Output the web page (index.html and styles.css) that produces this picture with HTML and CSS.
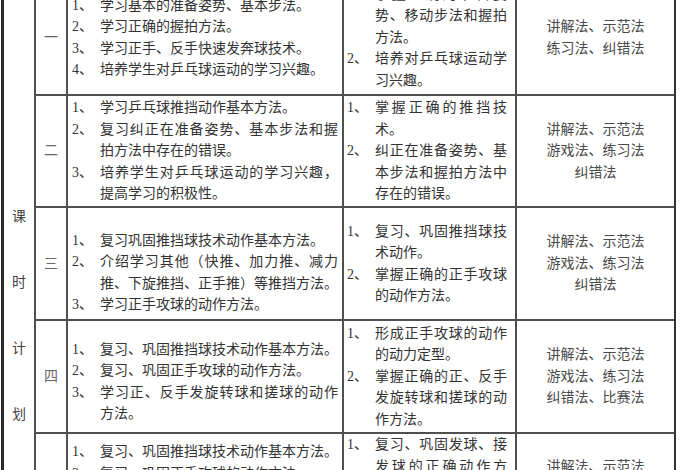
FILE: index.html
```html
<!DOCTYPE html>
<html lang="zh-CN">
<head>
<meta charset="utf-8">
<title>课时计划</title>
<link rel="stylesheet" href="styles.css">
</head>
<body>
<div class="sheet">
  <div class="side"><span>课</span><span>时</span><span>计</span><span>划</span></div>

  <!-- row 1 -->
  <div class="cell no">一</div>
  <div class="cell c3">
    <div class="item"><span class="num">1、</span><div class="txt"><span class="ln">学习基本的准备姿势、基本步法。</span></div></div>
    <div class="item"><span class="num">2、</span><div class="txt"><span class="ln">学习正确的握拍方法。</span></div></div>
    <div class="item"><span class="num">3、</span><div class="txt"><span class="ln">学习正手、反手快速发奔球技术。</span></div></div>
    <div class="item"><span class="num">4、</span><div class="txt"><span class="ln">培养学生对乒乓球运动的学习兴趣。</span></div></div>
  </div>
  <div class="cell c4">
    <div class="item"><span class="num">1、</span><div class="txt"><span class="ln j">掌握正确的准备姿</span><span class="ln j">势、移动步法和握拍</span><span class="ln">方法。</span></div></div>
    <div class="item"><span class="num">2、</span><div class="txt"><span class="ln j">培养对乒乓球运动学</span><span class="ln">习兴趣。</span></div></div>
  </div>
  <div class="cell c5"><span>讲解法、示范法</span><span>练习法、纠错法</span></div>

  <!-- row 2 -->
  <div class="cell no">二</div>
  <div class="cell c3">
    <div class="item"><span class="num">1、</span><div class="txt"><span class="ln">学习乒乓球推挡动作基本方法。</span></div></div>
    <div class="item"><span class="num">2、</span><div class="txt"><span class="ln j">复习纠正在准备姿势、基本步法和握</span><span class="ln">拍方法中存在的错误。</span></div></div>
    <div class="item"><span class="num">3、</span><div class="txt"><span class="ln j">培养学生对乒乓球运动的学习兴趣，</span><span class="ln">提高学习的积极性。</span></div></div>
  </div>
  <div class="cell c4">
    <div class="item"><span class="num">1、</span><div class="txt"><span class="ln j">掌握正确的推挡技</span><span class="ln">术。</span></div></div>
    <div class="item"><span class="num">2、</span><div class="txt"><span class="ln j">纠正在准备姿势、基</span><span class="ln j">本步法和握拍方法中</span><span class="ln">存在的错误。</span></div></div>
  </div>
  <div class="cell c5"><span>讲解法、示范法</span><span>游戏法、练习法</span><span>纠错法</span></div>

  <!-- row 3 -->
  <div class="cell no">三</div>
  <div class="cell c3 lower">
    <div class="item"><span class="num">1、</span><div class="txt"><span class="ln">复习巩固推挡球技术动作基本方法。</span></div></div>
    <div class="item"><span class="num">2、</span><div class="txt"><span class="ln j">介绍学习其他（快推、加力推、减力</span><span class="ln j">推、下旋推挡、正手推）等推挡方法。</span></div></div>
    <div class="item"><span class="num">3、</span><div class="txt"><span class="ln">学习正手攻球的动作方法。</span></div></div>
  </div>
  <div class="cell c4">
    <div class="item"><span class="num">1、</span><div class="txt"><span class="ln j">复习、巩固推挡球技</span><span class="ln">术动作。</span></div></div>
    <div class="item"><span class="num">2、</span><div class="txt"><span class="ln j">掌握正确的正手攻球</span><span class="ln">的动作方法。</span></div></div>
  </div>
  <div class="cell c5"><span>讲解法、示范法</span><span>游戏法、练习法</span><span>纠错法</span></div>

  <!-- row 4 -->
  <div class="cell no">四</div>
  <div class="cell c3 low">
    <div class="item"><span class="num">1、</span><div class="txt"><span class="ln">复习、巩固推挡球技术动作基本方法。</span></div></div>
    <div class="item"><span class="num">2、</span><div class="txt"><span class="ln">复习、巩固正手攻球的动作方法。</span></div></div>
    <div class="item"><span class="num">3、</span><div class="txt"><span class="ln j">学习正、反手发旋转球和搓球的动作</span><span class="ln">方法。</span></div></div>
  </div>
  <div class="cell c4">
    <div class="item"><span class="num">1、</span><div class="txt"><span class="ln j">形成正手攻球的动作</span><span class="ln">的动力定型。</span></div></div>
    <div class="item"><span class="num">2、</span><div class="txt"><span class="ln j">掌握正确的正、反手</span><span class="ln j">发旋转球和搓球的动</span><span class="ln">作方法。</span></div></div>
  </div>
  <div class="cell c5"><span>讲解法、示范法</span><span>游戏法、练习法</span><span>纠错法、比赛法</span></div>

  <!-- row 5 -->
  <div class="cell no">五</div>
  <div class="cell c3 r5c3">
    <div class="item"><span class="num">1、</span><div class="txt"><span class="ln">复习、巩固推挡球技术动作基本方法。</span></div></div>
    <div class="item"><span class="num">2、</span><div class="txt"><span class="ln">复习、巩固正手攻球的动作方法。</span></div></div>
    <div class="item"><span class="num">3、</span><div class="txt"><span class="ln">复习、巩固发球、接发球的动作方法。</span></div></div>
  </div>
  <div class="cell c4 r5c4">
    <div class="item"><span class="num">1、</span><div class="txt"><span class="ln j">复习、巩固发球、接</span><span class="ln j">发球的正确动作方</span><span class="ln">法。</span></div></div>
  </div>
  <div class="cell c5 r5c5"><span>讲解法、示范法</span><span>游戏法、练习法</span><span>纠错法、比赛法</span></div>
</div>
</body>
</html>
```

FILE: styles.css
```css
html, body {
  margin: 0;
  padding: 0;
  background: #ffffff;
  overflow: hidden;
}

body {
  font-family: "Liberation Serif", "Noto Sans CJK SC", serif;
  font-size: 14px;
  color: #333333;
}

.sheet {
  box-sizing: border-box;
  width: 675px;
  margin: -21px 0 0 1px;
  display: grid;
  grid-template-columns: 30px 30px 274px 171px 157px;
  grid-template-rows: 113px 110px 111px 111px 120px;
  gap: 2px;
  background: #505050;
  border-top: 2px solid #505050;
  border-left: 3px solid #2a2a2a;
  border-right: 2px solid #333333;
}

.side {
  grid-column: 1;
  grid-row: 1 / 6;
  background: #fff;
  display: flex;
  flex-direction: column;
  align-items: center;
  padding-top: 203px;
  line-height: 66px;
  color: #444;
}

.cell {
  background: #fff;
  display: flex;
  flex-direction: column;
  justify-content: center;
  line-height: 21.5px;
}

.no {
  grid-column: 2;
  align-items: center;
  color: #666;
}

.c3 {
  grid-column: 3;
  padding: 0 4px 0 4px;
}

.c4 {
  grid-column: 4;
  padding: 0 8px 0 3px;
}

.c5 {
  grid-column: 5;
  align-items: center;
  color: #4a4a4a;
}

.c5 span {
  display: block;
}

.item {
  display: flex;
}

.num {
  flex: 0 0 28px;
  white-space: nowrap;
}

.txt {
  flex: 1 1 auto;
  min-width: 0;
}

.ln {
  display: block;
  white-space: nowrap;
  text-align: left;
}

.ln.j {
  text-align: justify;
  text-align-last: justify;
  white-space: normal;
}

.low {
  padding-top: 10px;
}

.lower {
  padding-top: 18px;
}

.r5c3,
.r5c4,
.r5c5 {
  justify-content: flex-start;
}

.r5c3 { padding-top: 7px; }
.r5c4 { padding-top: 0; }
.r5c5 { padding-top: 22px; }
```
